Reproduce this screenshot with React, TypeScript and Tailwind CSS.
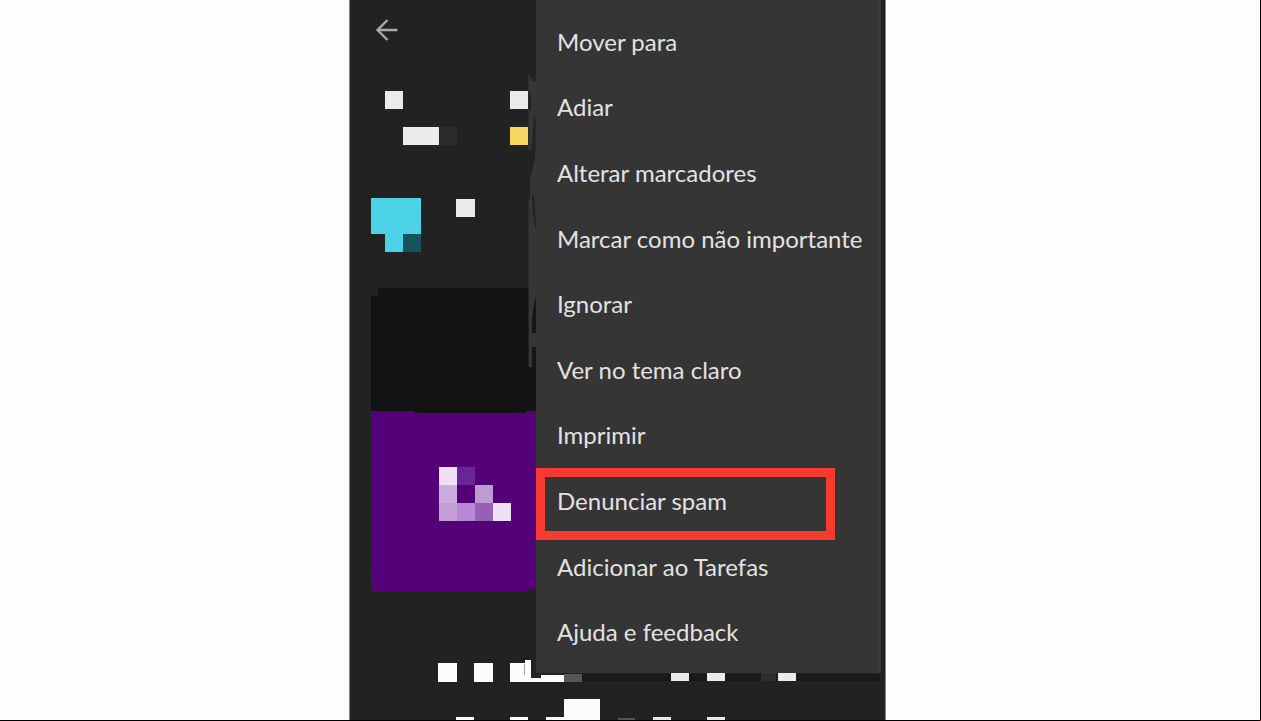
import React from 'react';

const menuItems: string[] = [
  'Mover para',
  'Adiar',
  'Alterar marcadores',
  'Marcar como não importante',
  'Ignorar',
  'Ver no tema claro',
  'Imprimir',
  'Denunciar spam',
  'Adicionar ao Tarefas',
  'Ajuda e feedback',
];

const highlighted = 'Denunciar spam';

type Block = [x: number, y: number, w: number, h: number, fill: string];

const blocks: Block[] = [
  // sender row
  [35, 91, 18, 18, '#ebebeb'],
  [160, 91, 18, 18, '#ebebeb'],
  [53, 127, 36, 18, '#ebebeb'],
  [90, 127, 17, 18, '#2b2b2b'],
  [160, 127, 18, 18, '#f8d55f'],
  // avatar
  [21, 198, 50, 36, '#4bd2e6'],
  [35, 234, 18, 18, '#4bd2e6'],
  [53, 234, 18, 18, '#15535e'],
  [106, 199, 19, 18, '#ebebeb'],
  // message banner
  [28, 288, 157, 10, '#131313'],
  [21, 296, 165, 117, '#131313'],
];

const logo: Block[] = [
  [89, 467, 18, 18, '#efe0f5'],
  [107, 467, 18, 18, '#6a2494'],
  [89, 485, 18, 18, '#cbacdd'],
  [125, 485, 18, 18, '#bd9cd2'],
  [89, 503, 18, 18, '#c29dd8'],
  [107, 503, 18, 18, '#b988d4'],
  [125, 503, 18, 18, '#975fb8'],
  [143, 503, 18, 18, '#efe0f5'],
];

const footer: Block[] = [
  [88, 663, 19, 19, '#fcfcfc'],
  [124, 663, 19, 19, '#fcfcfc'],
  [160, 663, 17, 19, '#fcfcfc'],
  [175, 660, 6, 22, '#fcfcfc'],
  [174, 664, 1, 11, '#a0a0a0'],
  [181, 678, 33, 4, '#fcfcfc'],
  [191, 675, 23, 7, '#fcfcfc'],
  [214, 674, 18, 8, '#565656'],
  [232, 674, 298, 7, '#1a1a1a'],
  [321, 672, 18, 9, '#ebebeb'],
  [357, 672, 18, 9, '#ebebeb'],
  [411, 673, 15, 8, '#2d2d2d'],
  [428, 673, 18, 8, '#ebebeb'],
  [106, 717, 18, 3, '#fcfcfc'],
  [160, 717, 18, 3, '#fcfcfc'],
  [196, 717, 18, 3, '#fcfcfc'],
  [214, 699, 36, 21, '#fcfcfc'],
  [268, 718, 17, 2, '#555555'],
  [303, 717, 18, 3, '#ebebeb'],
  [357, 717, 18, 3, '#ebebeb'],
];

function Blocks({ items }: { items: Block[] }) {
  return (
    <>
      {items.map(([x, y, w, h, fill]) => (
        <rect key={`${x}-${y}`} x={x} y={y} width={w} height={h} fill={fill} />
      ))}
    </>
  );
}

function CensoredMessage() {
  return (
    <svg
      viewBox="0 0 535 720"
      className="block h-[720px] w-[535px] shrink-0"
      shapeRendering="crispEdges"
      aria-hidden="true"
    >
      <Blocks items={blocks} />
      <path
        d="M21 411H65V413H176V411H186V589H178L175 592H27Q21 592 21 585Z"
        fill="#540079"
      />
      <Blocks items={logo} />
      <g shapeRendering="geometricPrecision">
        <path
          d="M178.500 74L183 81H187V333H186V347H182V367H178.500V200H180V170H178.500Z"
          fill="#353535"
        />
        <path
          d="M179 92L181 96V110H179ZM184 113L185.500 120V152L184.500 160L181 175H178.500V150H181L183 135Z"
          fill="#222222"
        />
        <path d="M182 195H184L186 222V230L183 215Z" fill="#222222" />
        <path d="M186 296V333H182V318L184 304ZM182 347H186V368H182Z" fill="#161616" />
      </g>
      <Blocks items={footer} />
    </svg>
  );
}

function OverflowMenu() {
  return (
    <nav
      aria-label="Mais opções"
      className="absolute top-0 left-[186px] w-[345px] border-r-4 border-[#3a3a3a] bg-[#353535] pt-[9px] pb-2"
    >
      <ul className="grid h-[656px] grid-rows-10">
        {menuItems.map((item) => (
          <li key={item} className="relative">
            {item === highlighted && (
              <span className="pointer-events-none absolute top-0 left-0 h-[72px] w-[299px] border-9 border-[#f63a30]" />
            )}
            <button
              type="button"
              className="flex h-full w-full items-center pl-[21px] text-left text-[24px] leading-8 whitespace-nowrap text-[#e2e2e2]"
            >
              {item}
            </button>
          </li>
        ))}
      </ul>
    </nav>
  );
}

export default function App() {
  return (
    <main className="relative flex min-h-screen border-r border-b border-black bg-[#fdfdfd] font-['Lato','Open_Sans',sans-serif]">
      <div className="grow-[349] basis-0" />
      <section className="relative shrink-0 overflow-hidden border-x border-[#858585] bg-[#222222]">
        <CensoredMessage />
        <button
          type="button"
          aria-label="Voltar"
          className="absolute top-[14px] left-5 flex size-8 items-center justify-center"
        >
          <svg
            viewBox="0 0 24 24"
            className="size-6"
            fill="none"
            stroke="#aaa6b2"
            strokeWidth="2.4"
          >
            <path d="M23.5 12H3.5M13.5 2L3.5 12L13.5 22" />
          </svg>
        </button>
        <OverflowMenu />
      </section>
      <div className="grow-[374] basis-0" />
      <span className="absolute -right-px -bottom-px size-px bg-red-600" />
    </main>
  );
}
